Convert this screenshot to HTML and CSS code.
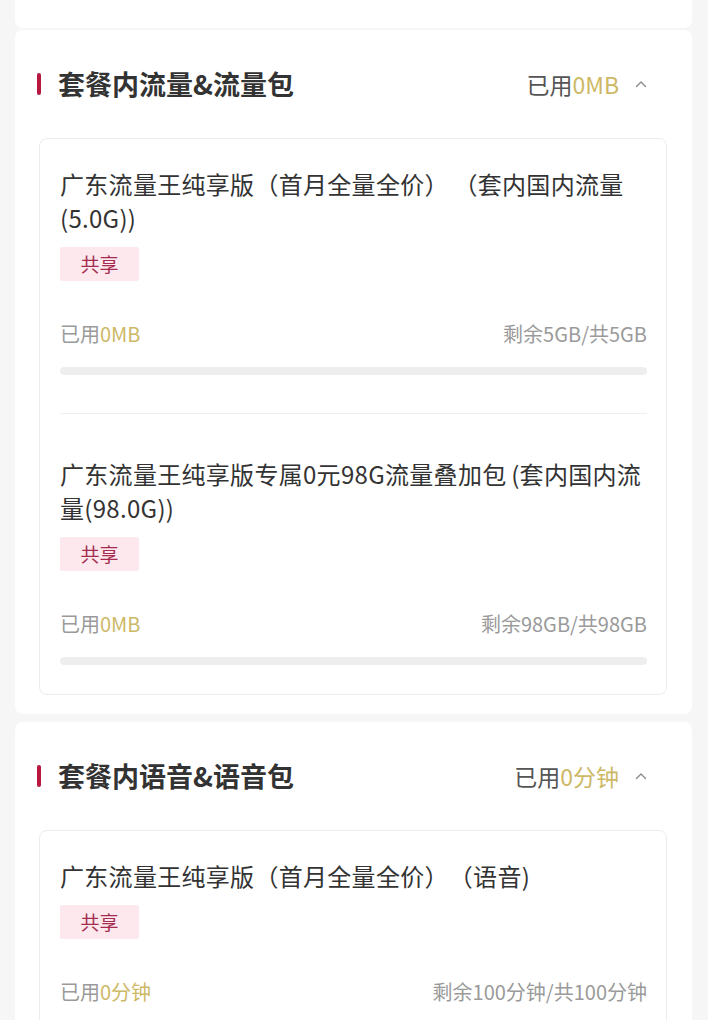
FILE: index.html
```html
<!DOCTYPE html>
<html lang="zh-CN">
<head>
<meta charset="utf-8">
<title>套餐使用情况</title>
<link rel="stylesheet" href="styles.css">
</head>
<body>
<div class="page">
  <div class="top-card"></div>

  <section class="section">
    <div class="section-head">
      <div class="head-left"><span class="bar"></span><h2 class="head-title">套餐内流量&amp;流量包</h2></div>
      <div class="head-right">
        <span class="head-used">已用<em class="gold">0MB</em></span>
        <svg class="caret" width="12" height="8" viewBox="0 0 12 8"><polyline points="1.5,6.5 6,2 10.5,6.5" fill="none" stroke="#8a8a8a" stroke-width="1.4" stroke-linecap="round" stroke-linejoin="round"/></svg>
      </div>
    </div>
    <div class="inner">
      <div class="item">
        <div class="item-title">广东流量王纯享版（首月全量全价） （套内国内流量(5.0G))</div>
        <span class="tag">共享</span>
        <div class="usage"><span>已用<em class="gold">0MB</em></span><span>剩余5GB/共5GB</span></div>
        <div class="progress"><div class="progress-fill" style="width:0%"></div></div>
      </div>
      <div class="item">
        <div class="item-title">广东流量王纯享版专属0元98G流量叠加包 (套内国内流量(98.0G))</div>
        <span class="tag">共享</span>
        <div class="usage"><span>已用<em class="gold">0MB</em></span><span>剩余98GB/共98GB</span></div>
        <div class="progress"><div class="progress-fill" style="width:0%"></div></div>
      </div>
    </div>
  </section>

  <section class="section">
    <div class="section-head">
      <div class="head-left"><span class="bar"></span><h2 class="head-title">套餐内语音&amp;语音包</h2></div>
      <div class="head-right">
        <span class="head-used">已用<em class="gold">0分钟</em></span>
        <svg class="caret" width="12" height="8" viewBox="0 0 12 8"><polyline points="1.5,6.5 6,2 10.5,6.5" fill="none" stroke="#8a8a8a" stroke-width="1.4" stroke-linecap="round" stroke-linejoin="round"/></svg>
      </div>
    </div>
    <div class="inner">
      <div class="item">
        <div class="item-title">广东流量王纯享版（首月全量全价）（语音)</div>
        <span class="tag">共享</span>
        <div class="usage"><span>已用<em class="gold">0分钟</em></span><span>剩余100分钟/共100分钟</span></div>
        <div class="progress"><div class="progress-fill" style="width:0%"></div></div>
      </div>
    </div>
  </section>
</div>
</body>
</html>
```

FILE: styles.css
```css
* { box-sizing: border-box; }
html, body { margin: 0; padding: 0; }
body {
  background: #f6f6f6;
  font-family: "Noto Sans CJK SC", "Noto Sans", sans-serif;
  color: #333;
}
.page {
  padding: 0 16px 40px 15px;
  display: flex;
  flex-direction: column;
  gap: 8px;
}
.top-card {
  height: 28px;
  background: #fff;
  border-radius: 0 0 8px 8px;
  margin-bottom: -6px;
}
.section {
  background: #fff;
  border-radius: 8px;
  padding: 36px 25px 19px 24px;
}
.section-head {
  display: flex;
  align-items: center;
  justify-content: space-between;
  height: 36px;
  margin-bottom: 36px;
}
.head-left { display: flex; align-items: center; }
.bar {
  width: 4px;
  height: 22px;
  border-radius: 2px;
  background: #b8173f;
  margin-left: -2px;
  margin-right: 17px;
}
.head-title {
  margin: 0;
  font-size: 27px;
  font-weight: 700;
  color: #333;
  line-height: 36px;
}
.head-right {
  display: flex;
  align-items: center;
  gap: 16px;
  padding-right: 20px;
}
.head-used {
  font-size: 23px;
  color: #555;
  line-height: 36px;
}
.gold { font-style: normal; color: #cdb866; }
.caret { display: block; }
.inner {
  border: 1px solid #ececec;
  border-radius: 8px;
  padding: 0 19px 0 20px;
}
.item {
  padding: 28px 0 29px;
}
.item + .item {
  border-top: 1px solid #f0f0f0;
  margin-top: 9px;
  padding-top: 43px;
}
.item-title {
  font-size: 24px;
  line-height: 34px;
  letter-spacing: 0.3px;
  word-spacing: -1px;
  text-spacing-trim: space-all;
  color: #333;
}
.tag {
  display: inline-block;
  margin-top: 12px;
  width: 79px;
  height: 34px;
  line-height: 34px;
  text-align: center;
  font-size: 19px;
  color: #a52c50;
  background: #fde9ed;
  border-radius: 2px;
}
.usage {
  margin-top: 39px;
  display: flex;
  justify-content: space-between;
  font-size: 20px;
  line-height: 28px;
  color: #9a9a9a;
}
.progress {
  margin-top: 19px;
  height: 8px;
  border-radius: 4px;
  background: #eeeeee;
  overflow: hidden;
}
.progress-fill { height: 100%; background: #cdb866; }
```
